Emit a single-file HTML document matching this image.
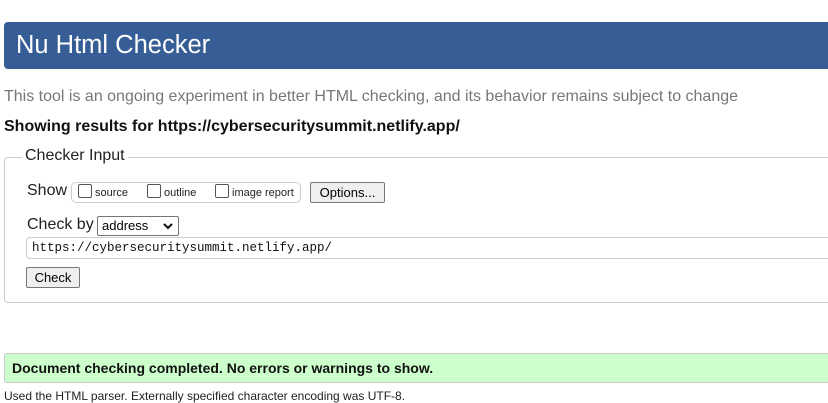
<!DOCTYPE html>
<html><head><meta charset="utf-8"><style>
body{margin:0;width:828px;height:403px;overflow:hidden;background:#fff;font-family:"Liberation Sans",Arial,sans-serif;position:relative}
.a{position:absolute;white-space:nowrap}
.cb{display:inline-block;width:12px;height:12px;border:1px solid #555;border-radius:2px;vertical-align:-2px;margin-right:3px;background:#fff}
</style></head><body>
<div class="a" style="left:4px;top:22px;width:840px;height:47px;background:#365d95;border-radius:4px"></div>
<div class="a" style="left:16px;top:31px;font-size:25.5px;color:#fff">Nu Html Checker</div>
<div class="a" style="left:4px;top:88px;font-size:16px;color:#777">This tool is an ongoing experiment in better HTML checking, and its behavior remains subject to change</div>
<div class="a" style="left:4px;top:118px;font-size:16px;font-weight:bold;color:#111">Showing results for https://cybersecuritysummit.netlify.app/</div>
<div class="a" style="left:4px;top:157px;width:840px;height:144px;border:1px solid #ccc;border-radius:4px"></div>
<div class="a" style="left:22px;top:147px;font-size:16px;color:#222;background:#fff;padding:0 3px">Checker Input</div>
<div class="a" style="left:27px;top:182px;font-size:16px;color:#222">Show</div>
<div class="a" style="left:71px;top:182px;width:228px;height:19px;border:1px solid #ccc;border-radius:5px"></div>
<div class="a" style="left:78px;top:184px;font-size:11px;color:#222"><span class="cb"></span>source</div>
<div class="a" style="left:147px;top:184px;font-size:11px;color:#222"><span class="cb"></span>outline</div>
<div class="a" style="left:215px;top:184px;font-size:11px;color:#222"><span class="cb"></span>image report</div>
<div class="a" style="left:310px;top:182px;width:73px;height:19px;border:1px solid #777;border-radius:2px;background:#efefef;font-size:13px;text-align:center;line-height:19px">Options...</div>
<div class="a" style="left:27px;top:216px;font-size:16px;color:#222">Check by</div>
<div class="a" style="left:97px;top:216px;border:1px solid #767676;border-radius:2px;font-size:13px;line-height:18px;padding-left:4px;box-sizing:border-box;width:82px;height:20px">address<svg style="position:absolute;right:5px;top:6px" width="10" height="7" viewBox="0 0 10 7"><path d="M1 1L5 5L9 1" stroke="#111" stroke-width="2" fill="none"/></svg></div>
<div class="a" style="left:26px;top:237px;width:840px;height:20px;border:1px solid #ccc;border-radius:4px"></div>
<div class="a" style="left:32px;top:241px;font-size:12.5px;font-family:'Liberation Mono',monospace;color:#111">https://cybersecuritysummit.netlify.app/</div>
<div class="a" style="left:26px;top:267px;width:52px;height:19px;border:1px solid #777;border-radius:2px;background:#efefef;font-size:13px;text-align:center;line-height:19px">Check</div>
<div class="a" style="left:4px;top:353px;width:840px;height:28px;background:#ccffcc;border:1px solid #ccc;border-radius:3px"></div>
<div class="a" style="left:12px;top:360px;font-size:14px;font-weight:bold;color:#111">Document checking completed. No errors or warnings to show.</div>
<div class="a" style="left:4px;top:389px;font-size:12px;color:#222">Used the HTML parser. Externally specified character encoding was UTF-8.</div>
</body></html>
